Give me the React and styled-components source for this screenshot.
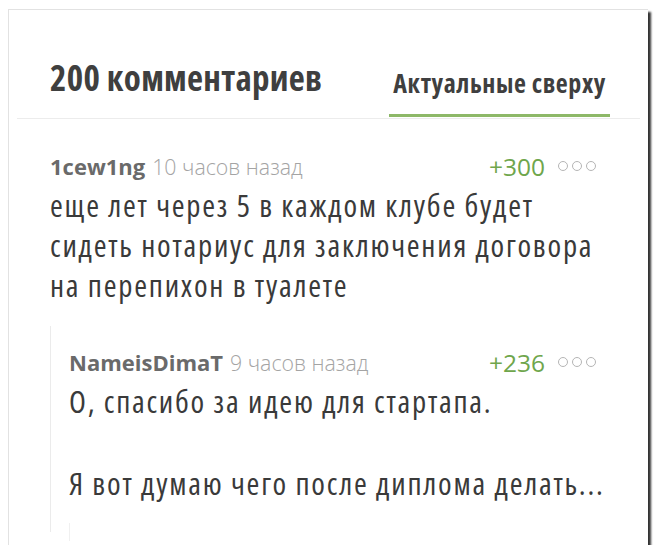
import React from "react";
import styled, { createGlobalStyle } from "styled-components";

const Global = createGlobalStyle`
  html, body { margin: 0; padding: 0; background: #fff; }
  body { font-family: "Open Sans", "DejaVu Sans", sans-serif; }
`;

const Frame = styled.div`
  margin: 9px 0 0 8px;
  width: 640px;
  height: 536px;
  box-sizing: border-box;
  background: #fff;
  border-top: 1px solid #e2e2e2;
  border-left: 1px solid #e2e2e2;
  box-shadow: 3px 3px 2px rgba(0, 0, 0, 0.8);
  overflow: hidden;
  padding: 0 8px;
`;

const Header = styled.div`
  display: flex;
  justify-content: space-between;
  align-items: flex-end;
  height: 108px;
  border-bottom: 1px solid #ececec;
  padding: 0 30px 0 33px;
  white-space: nowrap;
`;

const Title = styled.h2`
  margin: 0 0 23px;
  font-family: "Open Sans", sans-serif;
  font-stretch: 75%;
  font-weight: 700;
  font-size: 35px;
  letter-spacing: 0.3px;
  line-height: 1;
  color: #3f3f3f;
`;

const Tab = styled.div`
  font-family: "Open Sans", sans-serif;
  font-stretch: 75%;
  font-weight: 700;
  font-size: 26px;
  letter-spacing: 0.6px;
  line-height: 1;
  color: #3f3f3f;
  padding: 0 4px 18px;
  border-bottom: 3px solid #8db868;
  margin-bottom: 1px;
`;

const Comment = styled.div`
  padding: 35px 0 0 33px;
`;

const Reply = styled.div`
  margin-top: 21px;
  border-left: 1px solid #ebebeb;
  padding: 24px 0 0 18px;
  height: 206px;
  box-sizing: border-box;
`;

const Meta = styled.div`
  display: flex;
  align-items: center;
  height: 24px;
  font-family: "Open Sans", sans-serif;
  font-size: 22px;
  padding-right: 44px;
  white-space: nowrap;
`;

const Author = styled.span`
  font-weight: 700;
  color: #6a6a6a;
`;

const Time = styled.span`
  font-size: 21.3px;
  font-weight: 300;
  color: #a4a4a4;
  margin-left: 7px;
  flex: 1;
`;

const Score = styled.span`
  color: #6fa64c;
  font-size: 24.5px;
  font-weight: 500;
`;

const Dots = styled.span`
  display: flex;
  gap: 4px;
  margin-left: 13px;
`;

const Dot = styled.span`
  width: 10px;
  height: 10px;
  border: 1.5px solid #b5b5b5;
  border-radius: 50%;
  box-sizing: border-box;
`;

const Body = styled.div`
  margin-top: 7px;
  font-family: "Open Sans", sans-serif;
  font-stretch: 75%;
  font-size: 31px;
  letter-spacing: 1.75px;
  line-height: 40px;
  color: #3a3a3a;
  white-space: nowrap;
`;

const Para = styled.p`
  margin: 0 0 42px;
  &:last-child { margin-bottom: 0; }
`;

const Stub = styled.div`
  margin-top: 20px;
  height: 18px;
  border-left: 1px solid #f0f0f0;
`;

function MetaRow({ author, time, score }) {
  return (
    <Meta>
      <Author>{author}</Author>
      <Time>{time}</Time>
      <Score>{score}</Score>
      <Dots>
        <Dot />
        <Dot />
        <Dot />
      </Dots>
    </Meta>
  );
}

export default function App() {
  return (
    <>
      <Global />
      <Frame>
        <Header>
          <Title>200 комментариев</Title>
          <Tab>Актуальные сверху</Tab>
        </Header>
        <Comment>
          <MetaRow author="1cew1ng" time="10 часов назад" score="+300" />
          <Body>
            <Para>
              еще лет через 5 в каждом клубе будет
              <br />
              сидеть нотариус для заключения договора
              <br />
              на перепихон в туалете
            </Para>
          </Body>
          <Reply>
            <MetaRow author="NameisDimaT" time="9 часов назад" score="+236" />
            <Body>
              <Para>О, спасибо за идею для стартапа.</Para>
              <Para>Я вот думаю чего после диплома делать...</Para>
            </Body>
            <Stub />
          </Reply>
        </Comment>
      </Frame>
    </>
  );
}
